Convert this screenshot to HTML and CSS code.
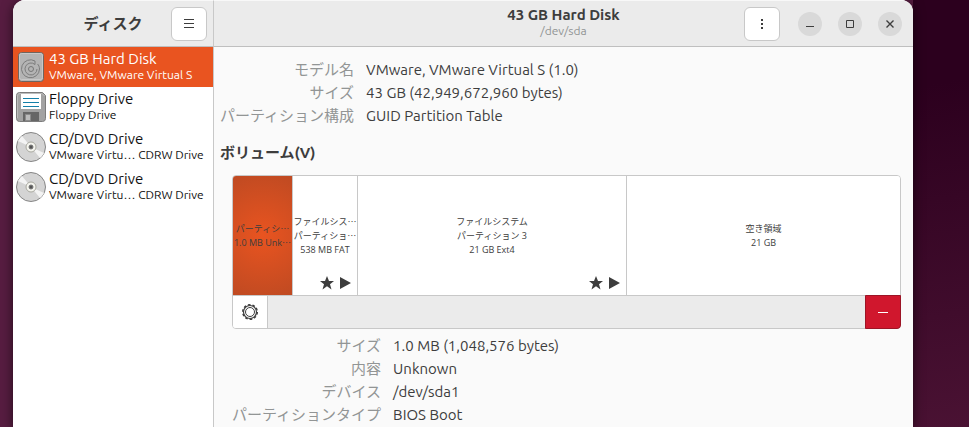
FILE: index.html
```html
<!DOCTYPE html>
<html lang="ja">
<head>
  <meta charset="utf-8">
  <title>ディスク</title>
  <link rel="stylesheet" href="styles.css">
</head>
<body>
  <div class="window">
    <header class="header side-header">
      <h1 class="title">ディスク</h1>
      <button class="header-btn" aria-label="メニュー">
        <svg width="16" height="16" viewBox="0 0 16 16"><path d="M3 3.500h10M3 7.500h10M3 11.500h10" stroke="#3d3d3d"/></svg>
      </button>
    </header>

    <header class="header main-header">
      <div class="heading">
        <h2 class="title">43 GB Hard Disk</h2>
        <p class="subtitle">/dev/sda</p>
      </div>
      <div class="controls">
        <button class="header-btn" aria-label="ドライブメニュー">
          <svg width="16" height="16" viewBox="0 0 16 16" fill="#3d3d3d"><path d="M7 3h2v2H7zM7 7h2v2H7zM7 11h2v2H7z"/></svg>
        </button>
        <div class="window-btns">
          <button class="round-btn" aria-label="最小化">
            <svg width="16" height="16" viewBox="0 0 16 16"><path d="M4 10.500h8" stroke="#3d3d3d"/></svg>
          </button>
          <button class="round-btn" aria-label="最大化">
            <svg width="16" height="16" viewBox="0 0 16 16"><path d="M4.500 4.500h7v7h-7z" fill="none" stroke="#3d3d3d"/></svg>
          </button>
          <button class="round-btn" aria-label="閉じる">
            <svg width="16" height="16" viewBox="0 0 16 16"><path d="M4.500 4.500l7 7M11.500 4.500l-7 7" stroke="#3d3d3d" stroke-width="1.400"/></svg>
          </button>
        </div>
      </div>
    </header>

    <nav class="sidebar">
      <button class="drive selected">
        <svg class="drive-icon" viewBox="0 0 30 30">
          <rect x="2.500" y=".5" width="25" height="29" rx="3" fill="#b4b4b4" stroke="#6f655f"/>
          <rect x="3.500" y="1.500" width="23" height="26" rx="2" fill="none" stroke="#c8c8c8"/>
          <path d="M19 12.500a6 6 0 1 0 2 4.500M19 12.500V9a9 9 0 1 0 4.500 8c0-2-.8-4-2-5" fill="none" stroke="#7c7c7c"/>
          <circle cx="15" cy="17" r="2.500" fill="none" stroke="#777"/>
        </svg>
        <span class="drive-text">
          <span class="drive-name">43 GB Hard Disk</span>
          <span class="drive-model">VMware, VMware Virtual S</span>
        </span>
      </button>
      <button class="drive">
        <svg class="drive-icon" viewBox="0 0 30 30">
          <path d="M3.500.5h23l3 3v23a3 3 0 0 1-3 3h-23a3 3 0 0 1-3-3v-23a3 3 0 0 1 3-3z" fill="#a2a2a2" stroke="#7c7c7c"/>
          <path d="M1.500 26V4a2.500 2.500 0 0 1 2.500-2.500h22L28.500 4" fill="none" stroke="#bcbcbc"/>
          <rect x="5" y="2" width="20" height="15" fill="#fff"/>
          <path d="M7 6.500h16M7 10.500h16M7 14.500h16" stroke="#147fa8"/>
          <path d="M7 20h16v9H7z" fill="#666"/>
          <path d="M9.500 22.500h5v6h-5z" fill="#bbb" stroke="#8a8a8a"/>
        </svg>
        <span class="drive-text">
          <span class="drive-name">Floppy Drive</span>
          <span class="drive-model">Floppy Drive</span>
        </span>
      </button>
      <button class="drive">
        <svg class="drive-icon" viewBox="0 0 30 30">
          <circle cx="15" cy="15" r="14.500" fill="#d4d4d4" stroke="#858585"/>
          <path d="M15 15L2 9A14 14 0 0 1 6 4zM15 15l13 6a14 14 0 0 1-4 5z" fill="#f3f3f3"/>
          <circle cx="15" cy="15" r="5" fill="#f4f4ee" stroke="#a9a9a0"/>
          <circle cx="15" cy="15" r="2" fill="#555" stroke="#777"/>
        </svg>
        <span class="drive-text">
          <span class="drive-name">CD/DVD Drive</span>
          <span class="drive-model">VMware Virtu… CDRW Drive</span>
        </span>
      </button>
      <button class="drive">
        <svg class="drive-icon" viewBox="0 0 30 30">
          <circle cx="15" cy="15" r="14.500" fill="#d4d4d4" stroke="#858585"/>
          <path d="M15 15L2 9A14 14 0 0 1 6 4zM15 15l13 6a14 14 0 0 1-4 5z" fill="#f3f3f3"/>
          <circle cx="15" cy="15" r="5" fill="#f4f4ee" stroke="#a9a9a0"/>
          <circle cx="15" cy="15" r="2" fill="#555" stroke="#777"/>
        </svg>
        <span class="drive-text">
          <span class="drive-name">CD/DVD Drive</span>
          <span class="drive-model">VMware Virtu… CDRW Drive</span>
        </span>
      </button>
    </nav>

    <main class="content">
      <dl class="info">
        <dt>モデル名</dt><dd>VMware, VMware Virtual S (1.0)</dd>
        <dt>サイズ</dt><dd>43 GB (42,949,672,960 bytes)</dd>
        <dt>パーティション構成</dt><dd>GUID Partition Table</dd>
      </dl>

      <h3 class="section-title">ボリューム(V)</h3>

      <div class="volumes">
        <div class="partitions">
          <button class="partition active" style="flex-grow: 59">
            <span>パーティシ⋯</span>
            <span>1.0 MB Unk⋯</span>
          </button>
          <button class="partition" style="flex-grow: 64">
            <span>ファイルシス⋯</span>
            <span>パーティショ⋯</span>
            <span>538 MB FAT</span>
            <svg class="flags" width="32" height="14" viewBox="0 0 32 14" fill="#3d3d3d">
              <path d="M7 0l2 5h5l-4 3.200L11.500 13.500 7 10.300 2.500 13.500 4 8.200 0 5h5zM20 1l11 6-11 6z"/>
            </svg>
          </button>
          <button class="partition" style="flex-grow: 268">
            <span>ファイルシステム</span>
            <span>パーティション 3</span>
            <span>21 GB Ext4</span>
            <svg class="flags" width="32" height="14" viewBox="0 0 32 14" fill="#3d3d3d">
              <path d="M7 0l2 5h5l-4 3.200L11.500 13.500 7 10.300 2.500 13.500 4 8.200 0 5h5zM20 1l11 6-11 6z"/>
            </svg>
          </button>
          <button class="partition" style="flex-grow: 273">
            <span>空き領域</span>
            <span>21 GB</span>
          </button>
        </div>
        <div class="toolbar">
          <button class="tool-btn" aria-label="パーティションオプション">
            <svg width="18" height="18" viewBox="0 0 18 18" fill="none" stroke="#3d3d3d">
              <circle cx="9" cy="9" r="7.300" stroke-width="1.400" stroke-dasharray="2.600 1.987"/>
              <circle cx="9" cy="9" r="6.500" stroke-width="1.200"/>
              <circle cx="9" cy="9" r="4.500"/>
            </svg>
          </button>
          <button class="tool-btn delete" aria-label="パーティションを削除">
            <svg width="16" height="16" viewBox="0 0 16 16"><path d="M3 8.500h10" stroke="#fff"/></svg>
          </button>
        </div>
      </div>

      <dl class="info volume-info">
        <dt>サイズ</dt><dd>1.0 MB (1,048,576 bytes)</dd>
        <dt>内容</dt><dd>Unknown</dd>
        <dt>デバイス</dt><dd>/dev/sda1</dd>
        <dt>パーティションタイプ</dt><dd>BIOS Boot</dd>
      </dl>
    </main>
  </div>
</body>
</html>
```

FILE: styles.css
```css
* {
  box-sizing: border-box;
}
body {
  margin: 0;
  padding: 0 56px 0 13px;
  height: 100vh;
  overflow: hidden;
  background: linear-gradient(170deg, #2c001e 20%, #4a1233) right / 56px 100% no-repeat, #571d41;
  font-family: Ubuntu, "Noto Sans", "Noto Sans CJK JP", sans-serif;
  font-size: 15px;
  color: #3d3d3d;
}
h1, h2, h3, p, dl, dd {
  margin: 0;
}
button {
  font: inherit;
  color: inherit;
  padding: 0;
  border: 0;
  background: none;
}
svg {
  display: block;
}
.window {
  display: grid;
  grid-template-columns: 201px 1fr;
  grid-template-rows: 47px 1fr;
  min-height: 100vh;
  background: #fafafa;
  border-radius: 12px 12px 0 0;
  overflow: hidden;
  box-shadow: 0 2px 12px rgba(0, 0, 0, 0.6);
}

/* header bar */
.header {
  display: grid;
  grid-template-columns: 1fr auto 1fr;
  align-items: center;
  background: #ebebeb;
  border-top: 1px solid #f8f8f8;
  border-bottom: 1px solid #bfbfbf;
}
.side-header {
  padding: 0 6px;
  border-right: 1px solid #c8c8c8;
}
.main-header {
  padding: 0 11px;
}
.title {
  grid-column: 2;
  font-size: 15px;
  line-height: 17px;
  font-weight: bold;
}
.heading {
  grid-column: 2;
  padding-bottom: 3px;
  text-align: center;
}
.subtitle {
  font-size: 12px;
  line-height: 16px;
  color: #929595;
}
.header-btn {
  display: grid;
  place-items: center;
  justify-self: end;
  width: 36px;
  height: 34px;
  background: #fff;
  border: 1px solid #c8c8c8;
  border-radius: 6px;
}
.controls {
  display: flex;
  align-items: center;
  justify-content: flex-end;
  gap: 18px;
}
.window-btns {
  display: flex;
  gap: 16px;
}
.round-btn {
  display: grid;
  place-items: center;
  width: 24px;
  height: 24px;
  border-radius: 50%;
  background: #d9d9d9;
}

/* drive list */
.sidebar {
  background: #fff;
  border-right: 1px solid #c8c8c8;
}
.drive {
  display: flex;
  align-items: center;
  gap: 3px;
  width: 100%;
  height: 40px;
  padding: 0 3px;
  text-align: left;
  color: #111;
}
.drive.selected {
  background: #e95420;
  color: #fff;
}
.drive-icon {
  flex: none;
  width: 30px;
  height: 30px;
}
.drive-text {
  padding-bottom: 2px;
  white-space: nowrap;
}
.drive-name, .drive-model {
  display: block;
  line-height: 17px;
}
.drive-model {
  font-size: 12px;
  line-height: 16px;
}

/* details */
.content {
  padding: 11px 12px 0 6px;
}
.info {
  display: grid;
  grid-template-columns: auto 1fr;
  column-gap: 12px;
  line-height: 23px;
}
.info dt {
  text-align: right;
  color: #929595;
}
.section-title {
  margin: 14px 0 11px;
  font-size: 15px;
  line-height: 23px;
}
.volumes {
  margin-left: 12px;
  border: 1px solid #c8c8c8;
  border-radius: 4px;
}
.partitions {
  display: flex;
  height: 119px;
}
.partition {
  position: relative;
  flex: 1 1 0;
  min-width: 0;
  background: #fff;
  border-right: 1px solid #c8c8c8;
  font-family: "Open Sans", "Noto Sans CJK JP", sans-serif;
  font-size: 9px;
  line-height: 14px;
}
.partition:first-child {
  border-top-left-radius: 3px;
}
.partition:last-child {
  border-right: 0;
  border-top-right-radius: 3px;
}
.partition.active {
  background: radial-gradient(circle, #e95420, #bf4a22);
}
.partition span {
  display: block;
  overflow: hidden;
  white-space: nowrap;
}
.flags {
  position: absolute;
  right: 5px;
  bottom: 5px;
}
.toolbar {
  display: flex;
  justify-content: space-between;
  height: 33px;
  background: #ebebeb;
  border-top: 1px solid #c8c8c8;
  border-radius: 0 0 3px 3px;
}
.tool-btn {
  display: grid;
  place-items: center;
  width: 35px;
  background: #fff;
  border-right: 1px solid #c8c8c8;
  border-bottom-left-radius: 3px;
}
.tool-btn.delete {
  width: 36px;
  margin: -1px -1px -1px 0;
  background: #d0172d;
  border: 1px solid #9c1526;
  border-radius: 0 0 4px 0;
}
.volume-info {
  margin: 5px 0 0 12px;
}
```
